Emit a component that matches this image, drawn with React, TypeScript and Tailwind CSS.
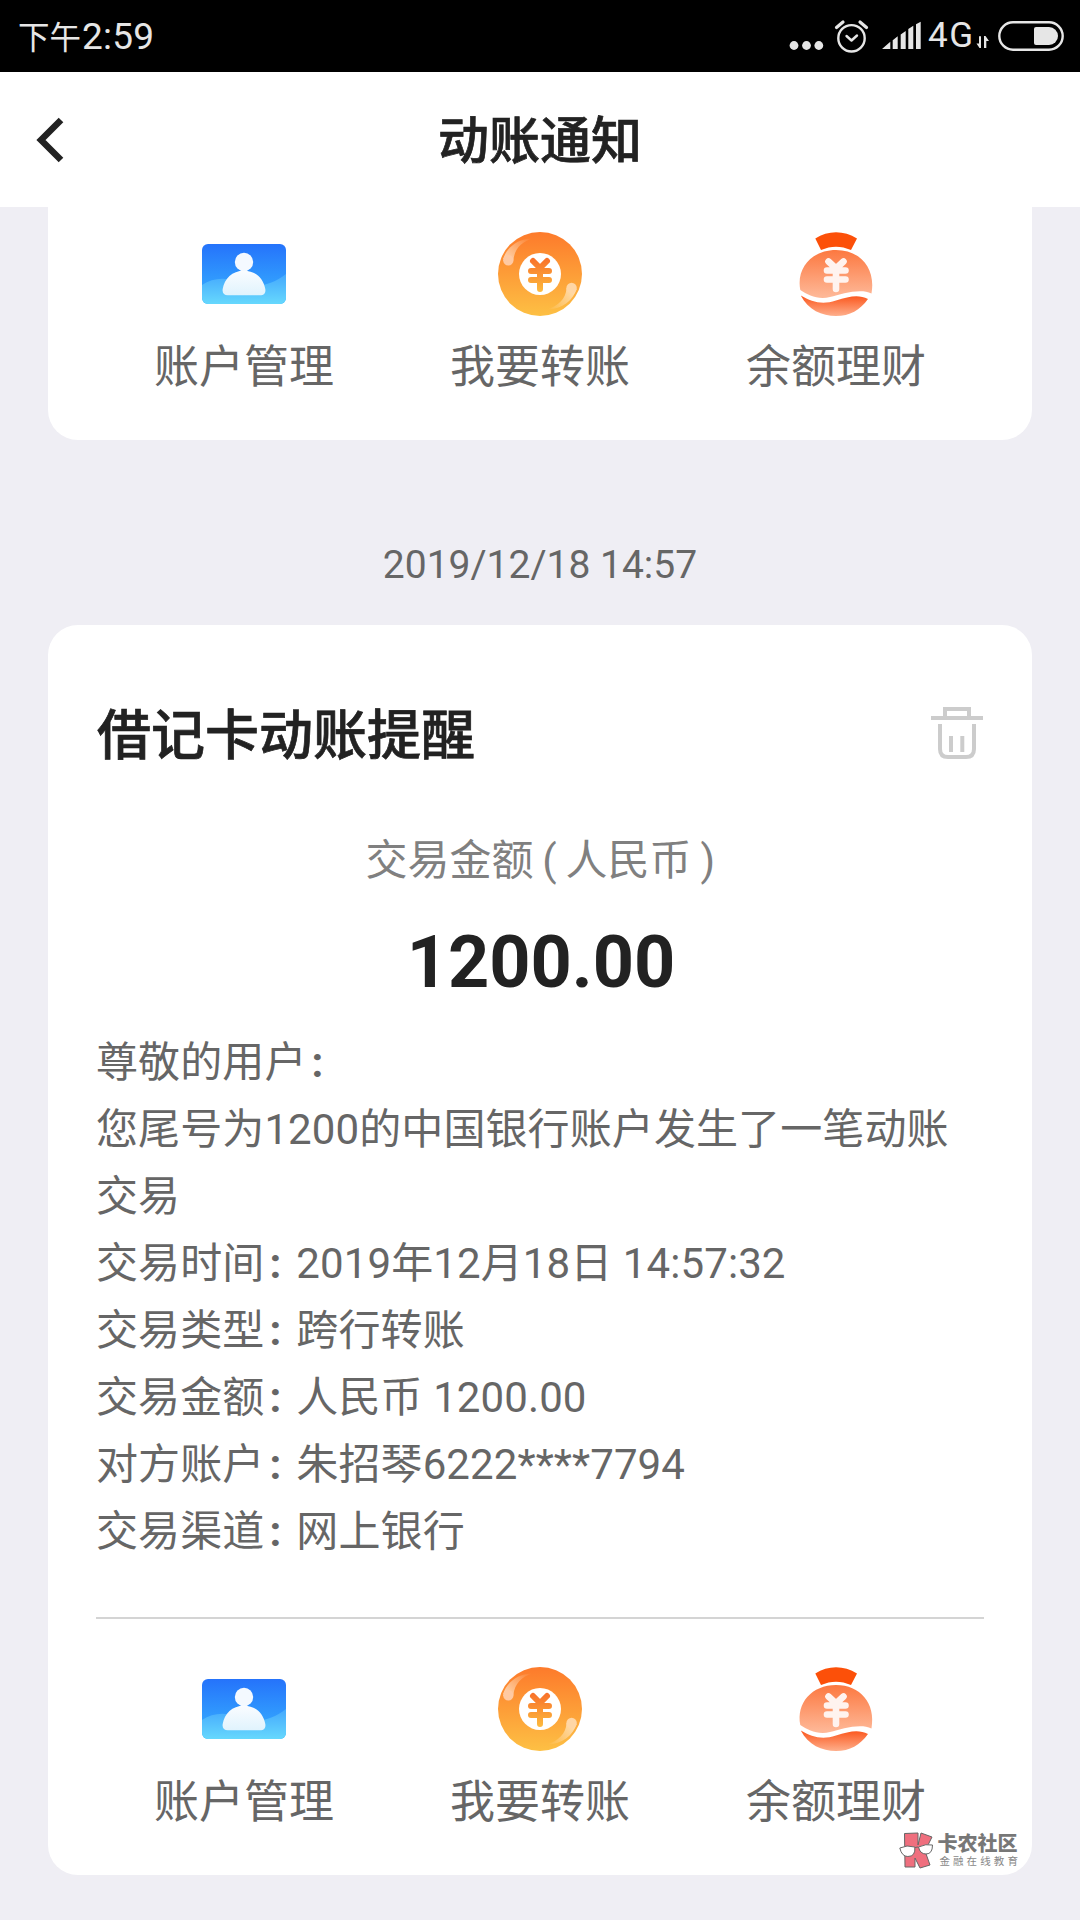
import type { ReactNode } from "react";

const StatusIcons = () => (
  <svg width="310" height="72" viewBox="0 0 310 72" fill="#e6e6e6" aria-hidden="true">
    <circle cx="24" cy="45.5" r="4.4" />
    <circle cx="36.5" cy="45.5" r="4.4" />
    <circle cx="48.8" cy="45.5" r="4.4" />
    <g fill="none" stroke="#e6e6e6" strokeLinecap="round" strokeLinejoin="round">
      <circle cx="81.5" cy="38.3" r="13.2" strokeWidth="2.4" />
      <path d="M76.5 36l5 4.5 5.5-5" strokeWidth="2.4" />
      <path d="M66.5 27.5l6.5-5.5M96.5 27.5l-6.5-5.5" strokeWidth="3.2" />
    </g>
    <path d="M112 49l8.3-7.2V49zM122.7 40.3l5-4V49h-5zM130.7 34.5l5-3.5V49h-5zM138.3 29l5-3.3V49h-5zM146 24.3l4.7-2.6V49H146z" />
    <path d="M209 36.3h2V48h-1.5l-3-4.5h2.5zM214 48V36h1.5l3.5 5h-2.7v7z" />
    <rect x="229.3" y="22.3" width="63.4" height="27.4" rx="13.7" fill="none" stroke="#e6e6e6" strokeWidth="2.4" />
    <path d="M266 27h13a9 9 0 0 1 0 18h-13a2 2 0 0 1-2-2V29a2 2 0 0 1 2-2z" />
  </svg>
);

const StatusBar = () => (
  <div className="flex h-[72px] shrink-0 items-center justify-between bg-black text-[#e6e6e6]">
    <span className="mt-[3px] ml-[18px] flex items-baseline text-[31.5px] leading-[72px]">
      下午<span className="ml-[1px] font-['Roboto'] text-[37px] tracking-[0.2px]">2:59</span>
    </span>
    <div className="relative h-[72px] w-[310px]">
      <StatusIcons />
      <span className="absolute top-[16px] left-[158px] font-['Roboto'] text-[35px] leading-[40px] tracking-[1.5px]">4G</span>
    </div>
  </div>
);

const AccountIcon = () => (
  <svg width="84" height="84" viewBox="0 0 84 84" aria-hidden="true">
    <defs>
      <linearGradient id="accountBg" x1="0" y1="0" x2="0" y2="1">
        <stop offset="0" stopColor="#2573fb" />
        <stop offset="1" stopColor="#38b4ff" />
      </linearGradient>
      <linearGradient id="accountWave" x1="0" y1="0" x2="0" y2="1">
        <stop offset="0" stopColor="#44a8fd" />
        <stop offset="1" stopColor="#66d8fd" />
      </linearGradient>
      <linearGradient id="accountBody" x1="0" y1="0" x2="0" y2="1">
        <stop offset="0" stopColor="#fafcff" />
        <stop offset="1" stopColor="#e0f3fd" />
      </linearGradient>
    </defs>
    <rect y="12" width="84" height="60" rx="6" fill="url(#accountBg)" />
    <path d="M0 53C10 46 22 45 34 49C54 57 68 54 84 42V66a6 6 0 0 1-6 6H6a6 6 0 0 1-6-6z" fill="url(#accountWave)" />
    <circle cx="42" cy="30" r="9.2" fill="#f4f9ff" />
    <path d="M42 38.7c12 0 19.5 8 21.3 18.3c.7 4-1.5 6.3-5 6.3H25.7c-3.5 0-5.7-2.3-5-6.3C22.5 46.7 30 38.7 42 38.7z" fill="url(#accountBody)" />
  </svg>
);

const TransferIcon = () => (
  <svg width="84" height="84" viewBox="0 0 84 84" aria-hidden="true">
    <defs>
      <linearGradient id="coin" x1="0" y1="0" x2="0" y2="84" gradientUnits="userSpaceOnUse">
        <stop offset="0" stopColor="#fd7a2b" />
        <stop offset="1" stopColor="#fdc044" />
      </linearGradient>
      <linearGradient id="coinYuan" x1="0" y1="26" x2="0" y2="60" gradientUnits="userSpaceOnUse">
        <stop offset="0" stopColor="#f8702a" />
        <stop offset="1" stopColor="#fdbb3d" />
      </linearGradient>
      <linearGradient id="shineTop" x1="10" y1="30" x2="34" y2="7" gradientUnits="userSpaceOnUse">
        <stop offset="0" stopColor="#ffd2ad" />
        <stop offset="1" stopColor="#ffd2ad" stopOpacity="0" />
      </linearGradient>
      <linearGradient id="shineBottom" x1="74" y1="56" x2="50" y2="78" gradientUnits="userSpaceOnUse">
        <stop offset="0" stopColor="#ffdfb0" />
        <stop offset="1" stopColor="#ffdfb0" stopOpacity="0" />
      </linearGradient>
    </defs>
    <circle cx="42" cy="42" r="42" fill="url(#coin)" />
    <path d="M5.2 27C8 17 19 6 35 6.5C24 9 16.5 17 15.4 28z" fill="url(#shineTop)" />
    <circle cx="10.3" cy="28.3" r="5.2" fill="#ffc9a2" />
    <path d="M78.7 57C75 68 65 77 49 77.5C60 74 68 67 68.5 56z" fill="url(#shineBottom)" />
    <circle cx="73.6" cy="56" r="5.2" fill="#ffd6a5" />
    <circle cx="42" cy="42" r="21" fill="#fff" />
    <path d="M35 29l7 7l7-7M33 39h18M33 48h18M42 37v20" fill="none" stroke="url(#coinYuan)" strokeWidth="6" strokeLinecap="round" />
  </svg>
);

const WealthIcon = () => (
  <svg width="84" height="84" viewBox="0 0 84 84" aria-hidden="true">
    <defs>
      <linearGradient id="bag" x1="0" y1="18" x2="0" y2="64" gradientUnits="userSpaceOnUse">
        <stop offset="0" stopColor="#fc7840" />
        <stop offset="1" stopColor="#feb796" />
      </linearGradient>
      <linearGradient id="bagBase" x1="0" y1="63" x2="0" y2="84" gradientUnits="userSpaceOnUse">
        <stop offset="0" stopColor="#fb541a" />
        <stop offset="1" stopColor="#feaf8c" />
      </linearGradient>
    </defs>
    <path d="M21.3 6.5C34-1.8 50-1.8 63 6.5L57 18C47 13.5 37 13.5 27 18z" fill="#fc5009" />
    <path d="M6.3 58C2 36 18 18 42 18S82 36 77.5 61.5C66 56 48 62 36 65C24 68 14 63 6.3 58z" fill="url(#bag)" />
    <path d="M6.8 63.5C18 70 28 73 42 68.5C56 64 65 62.5 74 67C66 78 56 84 42 84S14 78 6.8 63.5z" fill="url(#bagBase)" />
    <path d="M34.5 29.5l7.5 7l7.5-7M33 38.5h18.5M33 47.5h18.5M42 37v20" fill="none" stroke="#fff3ef" strokeWidth="6.6" strokeLinecap="round" />
  </svg>
);

const TrashIcon = () => (
  <svg width="52" height="52" viewBox="0 0 52 52" fill="none" stroke="#ccc" strokeWidth="4" aria-hidden="true">
    <path d="M0 11h52M14 10V2h24v8M9 17v25q0 8 8 8h18q8 0 8-8V17M20 29v16M31.3 29v16" />
  </svg>
);

const actions: { label: string; icon: ReactNode }[] = [
  { label: "账户管理", icon: <AccountIcon /> },
  { label: "我要转账", icon: <TransferIcon /> },
  { label: "余额理财", icon: <WealthIcon /> },
];

const ActionRow = () => (
  <div className="grid grid-cols-3">
    {actions.map(({ label, icon }) => (
      <button key={label} className="flex flex-col items-center">
        {icon}
        <span className="mt-[19px] text-[45px] leading-[66px] text-[#666]">{label}</span>
      </button>
    ))}
  </div>
);

const details = [
  { label: "交易时间", value: "2019年12月18日 14:57:32" },
  { label: "交易类型", value: "跨行转账" },
  { label: "交易金额", value: "人民币 1200.00" },
  { label: "对方账户", value: "朱招琴6222****7794" },
  { label: "交易渠道", value: "网上银行" },
];

// Narrow colon, kept inline so it doesn't stretch the line box
const Colon = () => <span className="pr-[15px] pl-[5px] font-bold">:</span>;

const Watermark = () => (
  <div className="absolute right-[11px] bottom-[5px] flex items-center">
    <svg width="36" height="38" viewBox="0 0 36 38" aria-hidden="true">
      <path d="M5.5 1.500L19 1v12L22 1l11 4l-7 14l5 14l-10 3l-5-10v9H6z" fill="#ef6f7e" stroke="#666" strokeWidth="1" />
      <path d="M.8 16q7-3.500 15-1q1 9.500-7 9.500q-6 0-8-8.500zM19.500 15q7.500-3.500 14-2q0 9-6.500 9q-6 0-7.500-7zM16 15.500l3-.5" fill="#fff" stroke="#666" strokeWidth="1" />
    </svg>
    <div className="ml-[2px] whitespace-nowrap text-[#888]">
      <div className="text-[20px] leading-[20px] font-black text-[#777]">卡农社区</div>
      <div className="mt-[2px] ml-[2px] text-[10.5px] leading-[12px] tracking-[3.1px]">金融在线教育</div>
    </div>
  </div>
);

const App = () => (
  <div className="flex h-[1920px] w-[1080px] flex-col overflow-hidden bg-[#efeef4] font-['Roboto','Noto_Sans_CJK_SC',sans-serif]">
    <StatusBar />

    <header className="grid h-[135px] shrink-0 grid-cols-[120px_1fr_120px] items-center bg-white text-[#222]">
      <button className="pl-[36px]" aria-label="返回">
        <svg width="28" height="46" viewBox="0 0 28 46" fill="none" stroke="#222" strokeWidth="6.5">
          <path d="M25 3L5 23l20 20" />
        </svg>
      </button>
      <h1 className="pt-[5px] text-center text-[51px] font-medium [-webkit-text-stroke:0.7px_#222]">动账通知</h1>
    </header>

    <main className="flex flex-col px-12">
      <section className="h-[233px] rounded-b-[30px] bg-white px-12 pt-[25px]">
        <ActionRow />
      </section>

      <time className="mt-[95px] text-center text-[39px] leading-[60px] text-[#666]">2019/12/18 14:57</time>

      <section className="relative mt-[30px] h-[1250px] rounded-[30px] bg-white px-12 pt-[69px]">
        <div className="flex h-[84px] items-start justify-between">
          <h2 className="mt-[3px] ml-px text-[54px] leading-[80px] font-medium text-[#222] [-webkit-text-stroke:0.7px_#222]">借记卡动账提醒</h2>
          <button className="mt-[13px] mr-[1px]" aria-label="删除">
            <TrashIcon />
          </button>
        </div>

        <p className="mt-[53px] flex justify-center text-[42px] leading-[60px] text-[#808080]">
          交易金额<span className="w-[32px] text-center">(</span>人民币<span className="w-[23px] pl-[9px]">)</span>
        </p>
        <p className="mt-[30px] pl-[2px] text-center text-[72px] leading-[84px] font-bold text-[#222]">1200.00</p>

        <div className="mt-[24px] text-[42px] leading-[67px] tracking-[0.1px] whitespace-nowrap text-[#666]">
          <p>尊敬的用户<Colon /></p>
          <p>您尾号为1200的中国银行账户发生了一笔动账<br />交易</p>
          {details.map(({ label, value }) => (
            <p key={label}>
              {label}
              <Colon />
              {value}
            </p>
          ))}
        </div>

        <hr className="mt-[52px] mb-[48px] border-t-2 border-[#d4d4d4]" />
        <ActionRow />
        <Watermark />
      </section>
    </main>
  </div>
);

export default App;
